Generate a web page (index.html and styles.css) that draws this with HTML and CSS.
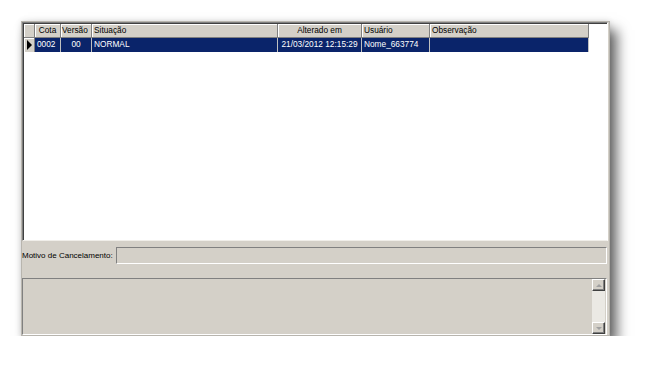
FILE: index.html
```html
<!DOCTYPE html>
<html>
<head>
<meta charset="utf-8">
<link rel="stylesheet" href="styles.css">
</head>
<body>
<div class="window">
  <div class="grid">
    <div class="row head">
      <div class="cell ind"></div>
      <div class="cell c-cota center">Cota</div>
      <div class="cell c-ver">Versão</div>
      <div class="cell c-sit">Situação</div>
      <div class="cell c-alt center">Alterado em</div>
      <div class="cell c-usu">Usuário</div>
      <div class="cell c-obs">Observação</div>
    </div>
    <div class="row sel">
      <div class="cell ind"><span class="arrow"></span></div>
      <div class="cell c-cota">0002</div>
      <div class="cell c-ver center">00</div>
      <div class="cell c-sit">NORMAL</div>
      <div class="cell c-alt center">21/03/2012 12:15:29</div>
      <div class="cell c-usu">Nome_663774</div>
      <div class="cell c-obs"></div>
    </div>
  </div>
  <div class="motivo">
    <span class="label">Motivo de Cancelamento:</span>
    <div class="input"></div>
  </div>
  <div class="memo">
    <div class="scroll">
      <div class="btn"><span class="up"></span></div>
      <div class="track"></div>
      <div class="btn"><span class="down"></span></div>
    </div>
  </div>
</div>
</body>
</html>
```
FILE: styles.css
```css
html, body { margin: 0; padding: 0; background: #fff; }
body { padding: 21px 0 0 21px; font-family: "Liberation Sans", Arial, sans-serif; font-size: 8.3px; color: #000; }
.window {
  width: 589px; height: 315px; box-sizing: border-box;
  background: #d4d0c8;
  border: 1px solid #b8b5ae;
  box-shadow: 7px 9px 12px rgba(0,0,0,0.6), 0 0 6px rgba(0,0,0,0.12);
  display: flex; flex-direction: column;
}
.grid {
  width: 586px; height: 219px; box-sizing: border-box;
  background: #fff;
  border-top: 1px solid #808080; border-left: 1px solid #808080;
  border-right: 1px solid #fff; border-bottom: 1px solid #f0eee9;
  box-shadow: inset 1px 1px 0 #404040;
  padding: 1px 0 0 1px;
}
.row { display: flex; height: 14px; }
.cell { box-sizing: border-box; height: 14px; line-height: 13px; padding: 0 2px; white-space: nowrap; overflow: hidden; }
.head .cell { background: #d4d0c8; border-right: 1px solid #808080; border-bottom: 1px solid #808080; box-shadow: inset 1px 1px 0 #fff; }
.sel .cell { background: #0a246a; color: #fff; border-right: 1px solid #c0c0c0; }
.sel .cell.ind { background: #d4d0c8; border-right: 1px solid #808080; box-shadow: inset 1px 1px 0 #fff; }
.center { text-align: center; }
.ind { width: 11px; padding: 0; position: relative; }
.c-cota { width: 26px; }
.c-ver { width: 31px; padding: 0 1px; }
.c-sit { width: 186px; }
.c-alt { width: 84px; }
.c-usu { width: 68px; }
.c-obs { width: 159px; }
.arrow { position: absolute; left: 3px; top: 2px; width: 0; height: 0; border-top: 5px solid transparent; border-bottom: 5px solid transparent; border-left: 5px solid #000; }
.motivo { display: flex; align-items: center; margin-top: 6px; height: 17px; }
.label { width: 94px; white-space: nowrap; font-size: 8px; }
.input {
  width: 491px; height: 17px; box-sizing: border-box;
  border-top: 1px solid #808080; border-left: 1px solid #808080;
  border-right: 1px solid #fff; border-bottom: 1px solid #fff;
  background: #d4d0c8;
}
.memo {
  margin-top: 14px; width: 585px; height: 57px; box-sizing: border-box;
  border-top: 1px solid #808080; border-left: 1px solid #808080;
  border-right: 1px solid #fff; border-bottom: 1px solid #fff;
  display: flex; justify-content: flex-end; padding: 0 1px 0 0;
}
.scroll { width: 13px; display: flex; flex-direction: column; }
.btn {
  height: 12px; box-sizing: border-box; background: #d4d0c8;
  border-top: 1px solid #fff; border-left: 1px solid #fff;
  border-right: 1px solid #404040; border-bottom: 1px solid #404040;
  box-shadow: inset -1px -1px 0 #808080;
  display: flex; align-items: center; justify-content: center;
}
.track { flex: 1; background: #ebe9e4; }
.up { width: 0; height: 0; border-left: 3px solid transparent; border-right: 3px solid transparent; border-bottom: 3px solid #a0a0a0; }
.down { width: 0; height: 0; border-left: 3px solid transparent; border-right: 3px solid transparent; border-top: 3px solid #a0a0a0; }
```
